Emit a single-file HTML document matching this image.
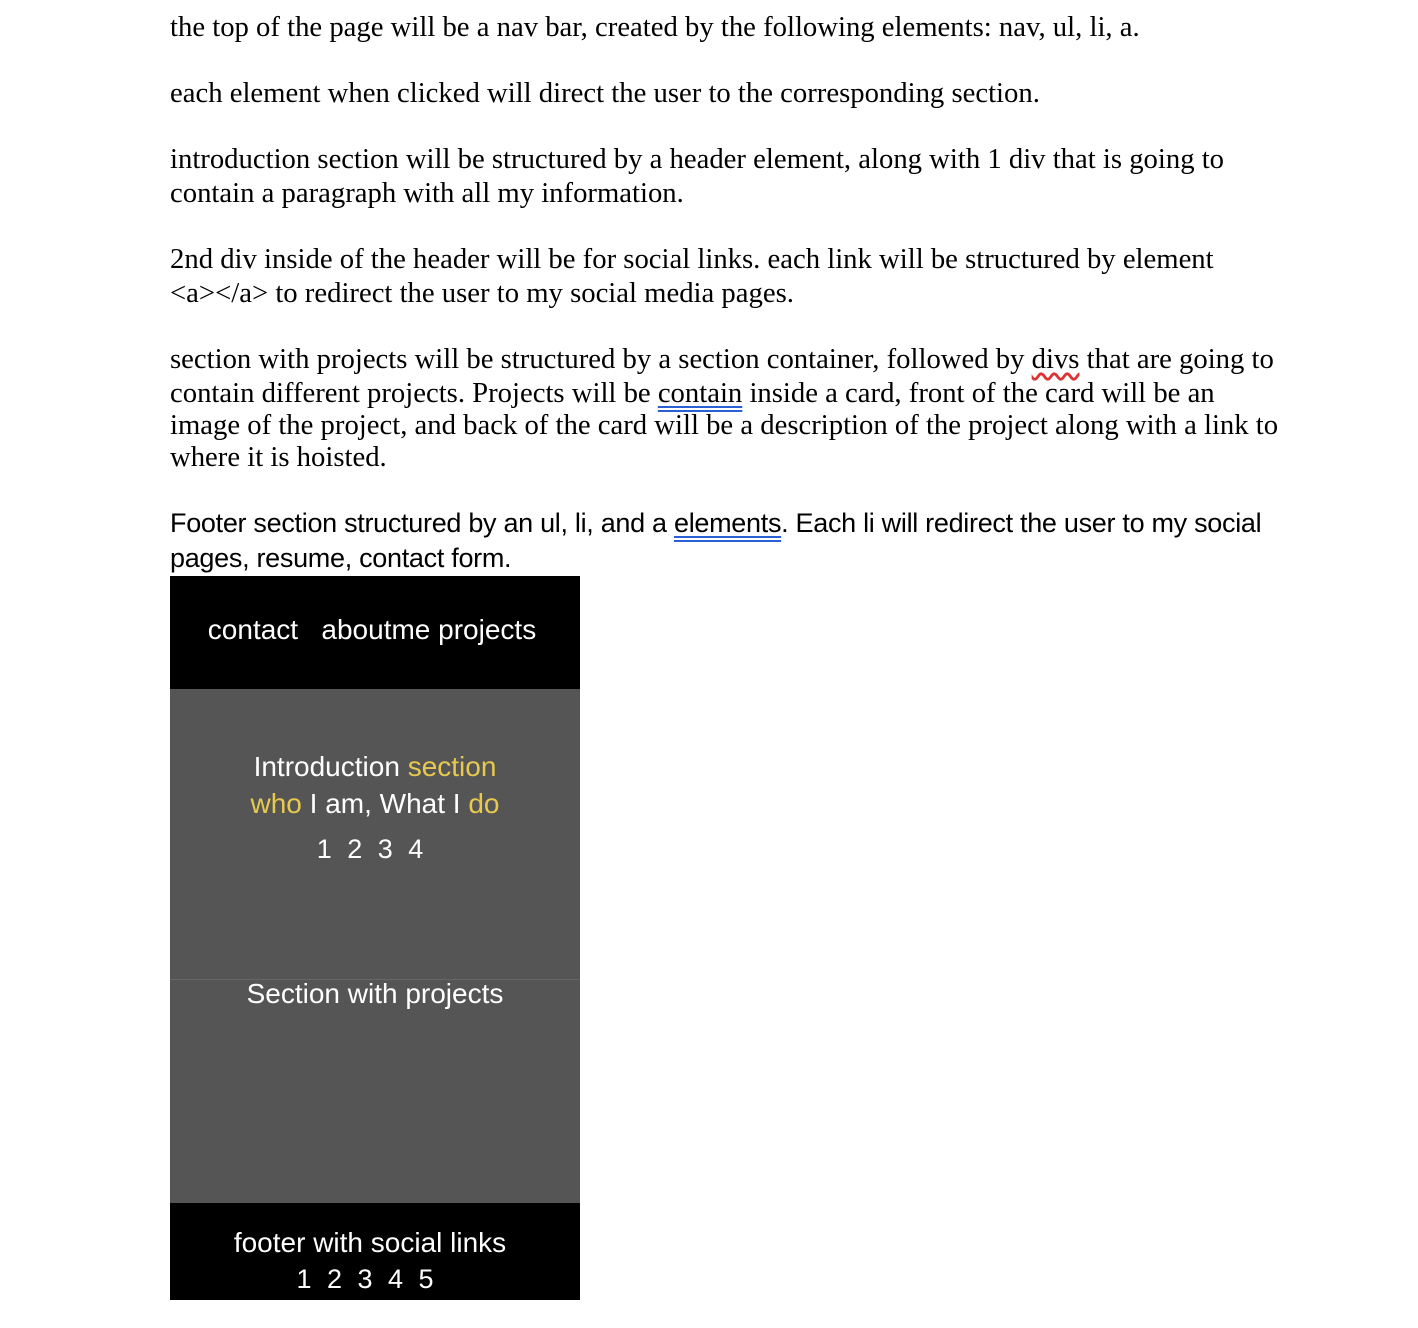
<!DOCTYPE html>
<html><head><meta charset="utf-8"><style>
body{margin:0;width:1418px;height:1328px;background:#fff;position:relative;overflow:hidden}
.s{position:absolute;left:170px;font-family:"Liberation Serif",serif;font-size:28.7px;color:#000;white-space:nowrap;line-height:34px}
.c{position:absolute;left:170px;font-family:"Liberation Sans",sans-serif;font-size:27px;color:#000;white-space:nowrap;line-height:34px;letter-spacing:-0.3px}
.u{text-decoration:underline double #2b5fd6;text-underline-offset:4px}
.w{text-decoration:underline wavy #d33;text-underline-offset:4px}
.m{position:absolute;left:170px;width:410px;font-family:"Liberation Sans",sans-serif;color:#fff;text-align:center}
.y{color:#e8c94f}
</style></head><body>
<div class="s" style="top:10px">the top of the page will be a nav bar, created by the following elements: nav, ul, li, a.</div>
<div class="s" style="top:76px">each element when clicked will direct the user to the corresponding section.</div>
<div class="s" style="top:142px">introduction section will be structured by a header element, along with 1 div that is going to</div>
<div class="s" style="top:176px">contain a paragraph with all my information.</div>
<div class="s" style="top:242px">2nd div inside of the header will be for social links. each link will be structured by element</div>
<div class="s" style="top:276px">&lt;a&gt;&lt;/a&gt; to redirect the user to my social media pages.</div>
<div class="s" style="top:342px">section with projects will be structured by a section container, followed by <span class="w">divs</span> that are going to</div>
<div class="s" style="top:376px">contain different projects. Projects will be <span class="u">contain</span> inside a card, front of the card will be an</div>
<div class="s" style="top:408px">image of the project, and back of the card will be a description of the project along with a link to</div>
<div class="s" style="top:440px">where it is hoisted.</div>
<div class="c" style="top:506px">Footer section structured by an ul, li, and a <span class="u">elements</span>. Each li will redirect the user to my social</div>
<div class="c" style="top:541px">pages, resume, contact form.</div>

<div style="position:absolute;left:170px;top:576px;width:410px;height:113px;background:#000"></div>
<div style="position:absolute;left:170px;top:689px;width:410px;height:290px;background:#555"></div>
<div style="position:absolute;left:170px;top:979px;width:410px;height:1px;background:#666"></div>
<div style="position:absolute;left:170px;top:980px;width:410px;height:223px;background:#555"></div>
<div style="position:absolute;left:170px;top:1203px;width:410px;height:97px;background:#000"></div>

<div class="m" style="top:614px;font-size:28px;padding-right:6px;box-sizing:border-box">contact&nbsp;&nbsp; aboutme projects</div>
<div class="m" style="top:748px;font-size:28px;line-height:37px">Introduction <span class="y">section</span><br><span class="y">who</span> I am, What I <span class="y">do</span></div>
<div class="m" style="top:834px;font-size:27px;letter-spacing:4px;padding-right:6px;box-sizing:border-box">1 2 3 4</div>
<div class="m" style="top:978px;font-size:28px">Section with projects</div>
<div class="m" style="top:1227px;font-size:28px;padding-right:10px;box-sizing:border-box">footer with social links</div>
<div class="m" style="top:1264px;font-size:27px;letter-spacing:4px;padding-right:16px;box-sizing:border-box">1 2 3 4 5</div>
</body></html>
